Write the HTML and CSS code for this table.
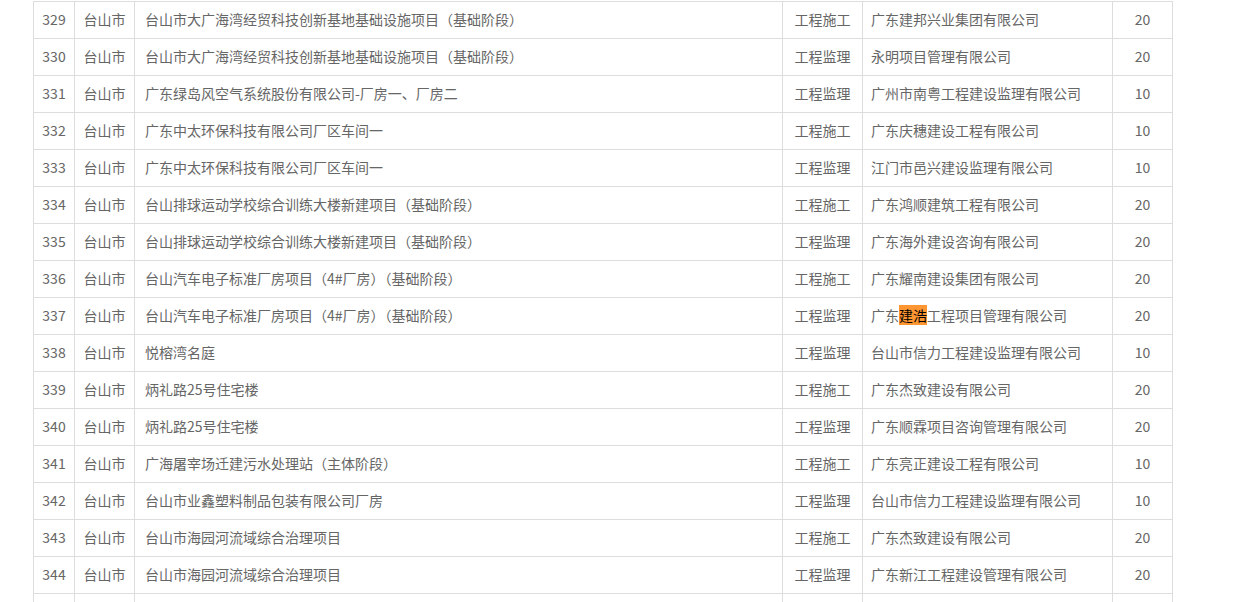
FILE: index.html
```html
<!DOCTYPE html>
<html>
  <head>
    <title>项目名单</title>
    <link rel="stylesheet" href="styles.css">
  </head>
  <body>
    <div class="list-wrap">
      <table class="list">
        <colgroup>
          <col class="c-no">
          <col class="c-city">
          <col class="c-name">
          <col class="c-type">
          <col class="c-company">
          <col class="c-score">
        </colgroup>
        <tbody>
          <tr><td class="no">329</td><td class="city">台山市</td><td class="name">台山市大广海湾经贸科技创新基地基础设施项目（基础阶段）</td><td class="type">工程施工</td><td class="company">广东建邦兴业集团有限公司</td><td class="score">20</td></tr>
          <tr><td class="no">330</td><td class="city">台山市</td><td class="name">台山市大广海湾经贸科技创新基地基础设施项目（基础阶段）</td><td class="type">工程监理</td><td class="company">永明项目管理有限公司</td><td class="score">20</td></tr>
          <tr><td class="no">331</td><td class="city">台山市</td><td class="name">广东绿岛风空气系统股份有限公司-厂房一、厂房二</td><td class="type">工程监理</td><td class="company">广州市南粤工程建设监理有限公司</td><td class="score">10</td></tr>
          <tr><td class="no">332</td><td class="city">台山市</td><td class="name">广东中太环保科技有限公司厂区车间一</td><td class="type">工程施工</td><td class="company">广东庆穗建设工程有限公司</td><td class="score">10</td></tr>
          <tr><td class="no">333</td><td class="city">台山市</td><td class="name">广东中太环保科技有限公司厂区车间一</td><td class="type">工程监理</td><td class="company">江门市邑兴建设监理有限公司</td><td class="score">10</td></tr>
          <tr><td class="no">334</td><td class="city">台山市</td><td class="name">台山排球运动学校综合训练大楼新建项目（基础阶段）</td><td class="type">工程施工</td><td class="company">广东鸿顺建筑工程有限公司</td><td class="score">20</td></tr>
          <tr><td class="no">335</td><td class="city">台山市</td><td class="name">台山排球运动学校综合训练大楼新建项目（基础阶段）</td><td class="type">工程监理</td><td class="company">广东海外建设咨询有限公司</td><td class="score">20</td></tr>
          <tr><td class="no">336</td><td class="city">台山市</td><td class="name">台山汽车电子标准厂房项目（4#厂房）（基础阶段）</td><td class="type">工程施工</td><td class="company">广东耀南建设集团有限公司</td><td class="score">20</td></tr>
          <tr><td class="no">337</td><td class="city">台山市</td><td class="name">台山汽车电子标准厂房项目（4#厂房）（基础阶段）</td><td class="type">工程监理</td><td class="company">广东<mark class="hit">建浩</mark>工程项目管理有限公司</td><td class="score">20</td></tr>
          <tr><td class="no">338</td><td class="city">台山市</td><td class="name">悦榕湾名庭</td><td class="type">工程监理</td><td class="company">台山市信力工程建设监理有限公司</td><td class="score">10</td></tr>
          <tr><td class="no">339</td><td class="city">台山市</td><td class="name">炳礼路25号住宅楼</td><td class="type">工程施工</td><td class="company">广东杰致建设有限公司</td><td class="score">20</td></tr>
          <tr><td class="no">340</td><td class="city">台山市</td><td class="name">炳礼路25号住宅楼</td><td class="type">工程监理</td><td class="company">广东顺霖项目咨询管理有限公司</td><td class="score">20</td></tr>
          <tr><td class="no">341</td><td class="city">台山市</td><td class="name">广海屠宰场迁建污水处理站（主体阶段）</td><td class="type">工程施工</td><td class="company">广东亮正建设工程有限公司</td><td class="score">10</td></tr>
          <tr><td class="no">342</td><td class="city">台山市</td><td class="name">台山市业鑫塑料制品包装有限公司厂房</td><td class="type">工程监理</td><td class="company">台山市信力工程建设监理有限公司</td><td class="score">10</td></tr>
          <tr><td class="no">343</td><td class="city">台山市</td><td class="name">台山市海园河流域综合治理项目</td><td class="type">工程施工</td><td class="company">广东杰致建设有限公司</td><td class="score">20</td></tr>
          <tr><td class="no">344</td><td class="city">台山市</td><td class="name">台山市海园河流域综合治理项目</td><td class="type">工程监理</td><td class="company">广东新江工程建设管理有限公司</td><td class="score">20</td></tr>
          <tr class="tail"><td></td><td></td><td></td><td></td><td></td><td></td></tr>
        </tbody>
      </table>
    </div>
  </body>
</html>
```

FILE: styles.css
```css
body {
  margin: 0;
  background-color: #ffffff;
  font-family: "Microsoft YaHei", "Noto Sans CJK SC", sans-serif;
  overflow: hidden;
}
.list-wrap {
  padding-left: 33px;
  padding-top: 1px;
}
table.list {
  border-collapse: collapse;
  table-layout: fixed;
  width: 1140px;
  font-size: 14px;
  color: #666666;
}
.c-no { width: 41px; }
.c-city { width: 60px; }
.c-name { width: 648px; }
.c-type { width: 80px; }
.c-company { width: 250px; }
.c-score { width: 60px; }
.list td {
  border: 1px solid #dddddd;
  height: 34px;
  padding: 0 0 2px;
  white-space: nowrap;
  overflow: hidden;
}
.no, .city, .type, .score {
  text-align: center;
}
.list td.name {
  padding-left: 10px;
}
.list td.company {
  padding-left: 8px;
}
.hit {
  background-color: #ff9632;
  color: #000000;
}
```
